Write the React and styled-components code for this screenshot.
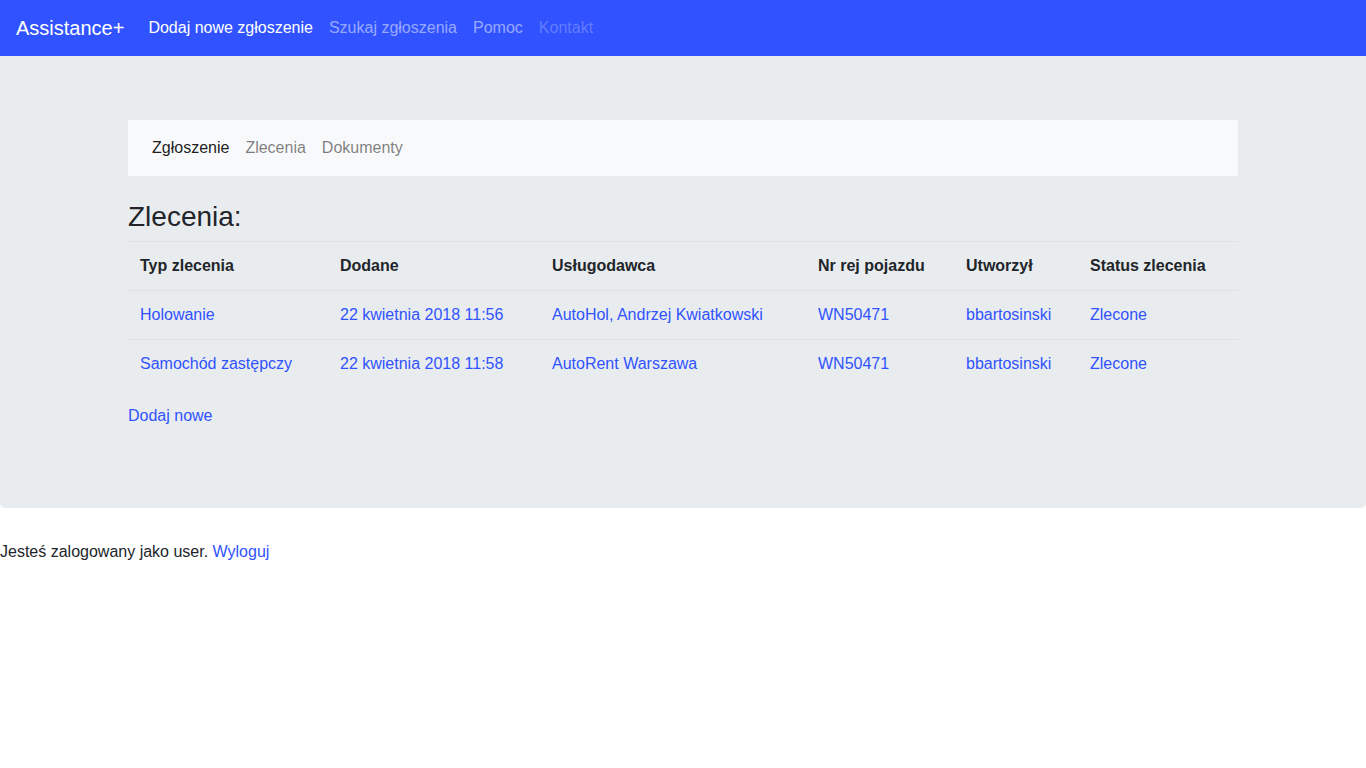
import React from "react"
import styled, { createGlobalStyle } from "styled-components"

const GlobalStyle = createGlobalStyle`
  body {
    margin: 0;
    font-family: "Liberation Sans", Arial, sans-serif;
    font-size: 16px;
    line-height: 1.5;
    color: #212529;
    background: #fff;
  }
  a {
    color: #3053ff;
    text-decoration: none;
  }
`

const TopBar = styled.nav`
  display: flex;
  align-items: center;
  height: 56px;
  box-sizing: border-box;
  padding: 8px 16px;
  background: #3053ff;
`

const Brand = styled.a`
  font-size: 20px;
  line-height: 30px;
  margin-right: 16px;
  color: #fff;
`

const TopLink = styled.a`
  padding: 8px;
  color: ${({ $state }) =>
    $state === "active" ? "#fff" : $state === "disabled" ? "rgba(255,255,255,.25)" : "rgba(255,255,255,.5)"};
`

const Jumbotron = styled.section`
  background: #e9ecef;
  padding: 64px 0;
  margin-bottom: 32px;
  border-radius: 0 0 4.8px 4.8px;
`

const Container = styled.div`
  width: 1110px;
  margin: 0 auto;
`

const SubNav = styled.nav`
  display: flex;
  align-items: center;
  height: 56px;
  box-sizing: border-box;
  padding: 8px 16px;
  background: #f8f9fa;
  margin-bottom: 24px;
`

const SubLink = styled.a`
  padding: 8px;
  color: ${({ $active }) => ($active ? "rgba(0,0,0,.9)" : "rgba(0,0,0,.5)")};
`

const Heading = styled.h3`
  margin: 0 0 8px;
  font-size: 28px;
  font-weight: 500;
  line-height: 33px;
`

const Table = styled.table`
  width: 100%;
  border-collapse: collapse;
  margin-bottom: 16px;
  table-layout: fixed;
`

const Th = styled.th`
  box-sizing: border-box;
  text-align: left;
  padding: 12px;
  font-weight: 700;
  border-top: 1px solid #dee2e6;
  border-bottom: 1px solid #dee2e6;
  width: ${({ $w }) => $w}px;
`

const Td = styled.td`
  padding: 12px;
  border-top: 1px solid #dee2e6;
  white-space: nowrap;
`

const Paragraph = styled.p`
  margin: 0 0 16px;
`

const Footer = styled.p`
  margin: 0;
`

const columns = [
  ["Typ zlecenia", 200],
  ["Dodane", 212],
  ["Usługodawca", 266],
  ["Nr rej pojazdu", 148],
  ["Utworzył", 124],
  ["Status zlecenia", 160],
]

const rows = [
  ["Holowanie", "22 kwietnia 2018 11:56", "AutoHol, Andrzej Kwiatkowski", "WN50471", "bbartosinski", "Zlecone"],
  ["Samochód zastępczy", "22 kwietnia 2018 11:58", "AutoRent Warszawa", "WN50471", "bbartosinski", "Zlecone"],
]

export default function App() {
  return (
    <>
      <GlobalStyle />
      <TopBar>
        <Brand href="#">Assistance+</Brand>
        <TopLink $state="active" href="#">Dodaj nowe zgłoszenie</TopLink>
        <TopLink href="#">Szukaj zgłoszenia</TopLink>
        <TopLink href="#">Pomoc</TopLink>
        <TopLink $state="disabled" href="#">Kontakt</TopLink>
      </TopBar>
      <Jumbotron>
        <Container>
          <SubNav>
            <SubLink $active href="#">Zgłoszenie</SubLink>
            <SubLink href="#">Zlecenia</SubLink>
            <SubLink href="#">Dokumenty</SubLink>
          </SubNav>
          <Heading>Zlecenia:</Heading>
          <Table>
            <thead>
              <tr>
                {columns.map(([name, w]) => (
                  <Th key={name} $w={w}>{name}</Th>
                ))}
              </tr>
            </thead>
            <tbody>
              {rows.map((row, i) => (
                <tr key={i}>
                  {row.map((cell, j) => (
                    <Td key={j}><a href="#">{cell}</a></Td>
                  ))}
                </tr>
              ))}
            </tbody>
          </Table>
          <Paragraph><a href="#">Dodaj nowe</a></Paragraph>
        </Container>
      </Jumbotron>
      <Footer>
        Jesteś zalogowany jako user. <a href="#">Wyloguj</a>
      </Footer>
    </>
  )
}
